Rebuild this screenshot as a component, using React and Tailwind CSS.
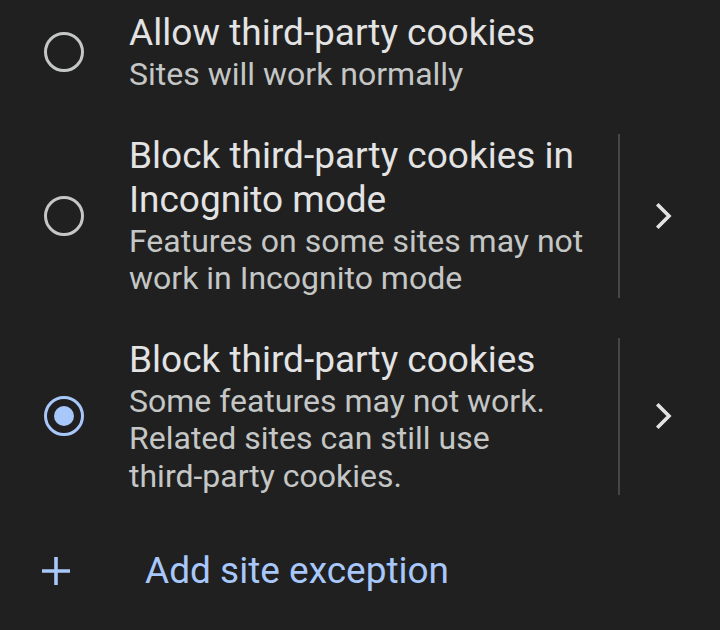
const Radio = ({ checked }) => {
  if (checked) {
    return (
      <div className="w-10 h-10 rounded-full border-[3px] border-[#a8c7fa] flex items-center justify-center shrink-0">
        <div className="w-5 h-5 rounded-full bg-[#a8c7fa]" />
      </div>
    );
  }
  return <div className="w-10 h-10 rounded-full border-[3px] border-[#c4c7c5] shrink-0" />;
};

const Chevron = () => (
  <svg width="16" height="26" viewBox="0 0 16 26" fill="none">
    <path d="M2.5 2.5 L13 13 L2.5 23.5" stroke="#e3e3e3" strokeWidth="3.6" strokeLinecap="square" />
  </svg>
);

const options = [
  {
    title: "Allow third-party cookies",
    desc: "Sites will work normally",
    checked: false,
    more: false,
  },
  {
    title: "Block third-party cookies in Incognito mode",
    desc: "Features on some sites may not work in Incognito mode",
    checked: false,
    more: true,
  },
  {
    title: "Block third-party cookies",
    desc: (
      <>
        Some features may not work. Related sites can still use{" "}
        <span className="whitespace-nowrap">third-party</span> cookies.
      </>
    ),
    checked: true,
    more: true,
  },
];

export default function App() {
  return (
    <div
      className="w-[720px] h-[630px] overflow-hidden bg-[#202020]"
      style={{ fontFamily: "Roboto, 'Noto Sans', sans-serif" }}
    >
      <div className="-mt-[9px]">
        {options.map((opt) => (
          <div key={opt.title} className="flex items-stretch py-5">
            {/* radio */}
            <div className="w-[129px] shrink-0 flex items-center pl-[44px]">
              <Radio checked={opt.checked} />
            </div>

            {/* text */}
            <div className="flex-1 pr-6">
              <p className="text-[37px] leading-[44px] text-[#e3e3e3]">{opt.title}</p>
              <p className="text-[32px] leading-[37.5px] text-[#c4c7c5] mt-[1px]">{opt.desc}</p>
            </div>

            {/* chevron */}
            {opt.more && (
              <div className="flex items-center">
                <div className="w-[2px] self-stretch bg-[#444746]" />
                <div className="w-[88px] flex items-center justify-center">
                  <Chevron />
                </div>
                <div className="w-3" />
              </div>
            )}
          </div>
        ))}

        {/* add exception */}
        <div className="flex items-center pt-[34px]">
          <div className="w-[145px] shrink-0 pl-[42px]">
            <svg width="28" height="28" viewBox="0 0 28 28" fill="none">
              <path d="M14 0 V28 M0 14 H28" stroke="#a8c7fa" strokeWidth="3.6" />
            </svg>
          </div>
          <p className="text-[37px] leading-[44px] text-[#a8c7fa]">Add site exception</p>
        </div>
      </div>
    </div>
  );
}
